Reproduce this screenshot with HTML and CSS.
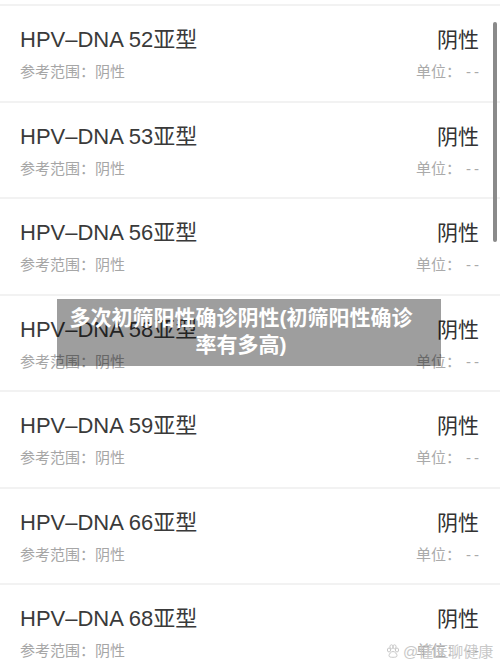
FILE: index.html
```html
<!DOCTYPE html>
<html lang="zh-CN">
<head>
  <meta charset="UTF-8" />
  <meta name="viewport" content="width=device-width, initial-scale=1.0"/>
  <title>HPV 检测结果</title>
  <link rel="stylesheet" href="styles.css">
</head>
<body>
  <ul class="result-list">
    <li class="result-item">
      <div class="item-left">
        <div class="item-name">HPV–DNA 52亚型</div>
        <div class="item-ref">参考范围：阴性</div>
      </div>
      <div class="item-right">
        <div class="item-value">阴性</div>
        <div class="item-unit">单位：<span class="dash">--</span></div>
      </div>
    </li>
    <li class="result-item">
      <div class="item-left">
        <div class="item-name">HPV–DNA 53亚型</div>
        <div class="item-ref">参考范围：阴性</div>
      </div>
      <div class="item-right">
        <div class="item-value">阴性</div>
        <div class="item-unit">单位：<span class="dash">--</span></div>
      </div>
    </li>
    <li class="result-item">
      <div class="item-left">
        <div class="item-name">HPV–DNA 56亚型</div>
        <div class="item-ref">参考范围：阴性</div>
      </div>
      <div class="item-right">
        <div class="item-value">阴性</div>
        <div class="item-unit">单位：<span class="dash">--</span></div>
      </div>
    </li>
    <li class="result-item">
      <div class="item-left">
        <div class="item-name">HPV–DNA 58亚型</div>
        <div class="item-ref">参考范围：阴性</div>
      </div>
      <div class="item-right">
        <div class="item-value">阴性</div>
        <div class="item-unit">单位：<span class="dash">--</span></div>
      </div>
    </li>
    <li class="result-item">
      <div class="item-left">
        <div class="item-name">HPV–DNA 59亚型</div>
        <div class="item-ref">参考范围：阴性</div>
      </div>
      <div class="item-right">
        <div class="item-value">阴性</div>
        <div class="item-unit">单位：<span class="dash">--</span></div>
      </div>
    </li>
    <li class="result-item">
      <div class="item-left">
        <div class="item-name">HPV–DNA 66亚型</div>
        <div class="item-ref">参考范围：阴性</div>
      </div>
      <div class="item-right">
        <div class="item-value">阴性</div>
        <div class="item-unit">单位：<span class="dash">--</span></div>
      </div>
    </li>
    <li class="result-item">
      <div class="item-left">
        <div class="item-name">HPV–DNA 68亚型</div>
        <div class="item-ref">参考范围：阴性</div>
      </div>
      <div class="item-right">
        <div class="item-value">阴性</div>
        <div class="item-unit">单位：<span class="dash">--</span></div>
      </div>
    </li>
  </ul>

  <div class="scrollbar"></div>

  <div class="caption">多次初筛阳性确诊阴性(初筛阳性确诊率有多高)</div>

  <div class="watermark">
    <svg width="14" height="14" viewBox="0 0 14 14">
      <g fill="none" stroke="#c8c8c8" stroke-width="1">
        <ellipse cx="3" cy="6" rx="1.6" ry="2"/>
        <ellipse cx="5.5" cy="2.8" rx="1.6" ry="2"/>
        <ellipse cx="8.5" cy="2.8" rx="1.6" ry="2"/>
        <ellipse cx="11" cy="6" rx="1.6" ry="2"/>
        <path d="M7 7.5c-2 0-4 2.5-4 4.2 0 1.3 1.5 1.6 4 1.6s4-.3 4-1.6c0-1.7-2-4.2-4-4.2z"/>
      </g>
    </svg>
    <span>@懂医聊健康</span>
  </div>
</body>
</html>
```

FILE: styles.css
```css
* { box-sizing: border-box; margin: 0; padding: 0; }
html, body {
  height: 666px;
  overflow: hidden;
}
body {
  background: #fff;
  font-family: "Liberation Sans", "Noto Sans CJK SC", sans-serif;
  color: #333;
  position: relative;
}
.result-list {
  list-style: none;
  padding-top: 4px;
}
.result-item {
  height: 96.5px;
  border-top: 2px solid #f2f2f2;
  padding: 20px 21px 0 20px;
  display: flex;
  justify-content: space-between;
}
.item-name {
  font-size: 22px;
  line-height: 28px;
  color: #3a3a3a;
}
.item-ref {
  margin-top: 8px;
  font-size: 15px;
  line-height: 20px;
  color: #a6a6a6;
}
.item-right {
  text-align: right;
}
.item-value {
  font-size: 21px;
  line-height: 28px;
  color: #333;
}
.item-unit {
  margin-top: 8px;
  font-size: 15px;
  line-height: 20px;
  color: #aaa;
  white-space: nowrap;
}
.dash {
  display: inline-block;
  margin-left: 5px;
  letter-spacing: 3px;
  margin-right: -3px;
}
.scrollbar {
  position: absolute;
  top: 22px;
  left: 493px;
  width: 4px;
  height: 220px;
  border-radius: 2px;
  background: #8a8a8a;
}
.caption {
  position: absolute;
  top: 299px;
  left: 57px;
  width: 384px;
  height: 67px;
  padding: 5px 28px 0 12px;
  background: rgba(0, 0, 0, 0.38);
  color: #fff;
  font-size: 21px;
  font-weight: bold;
  line-height: 27px;
  text-align: center;
}
.watermark {
  position: absolute;
  top: 640px;
  left: 386px;
  display: flex;
  align-items: center;
  gap: 3px;
  font-size: 15px;
  color: #c8c8c8;
}
```
